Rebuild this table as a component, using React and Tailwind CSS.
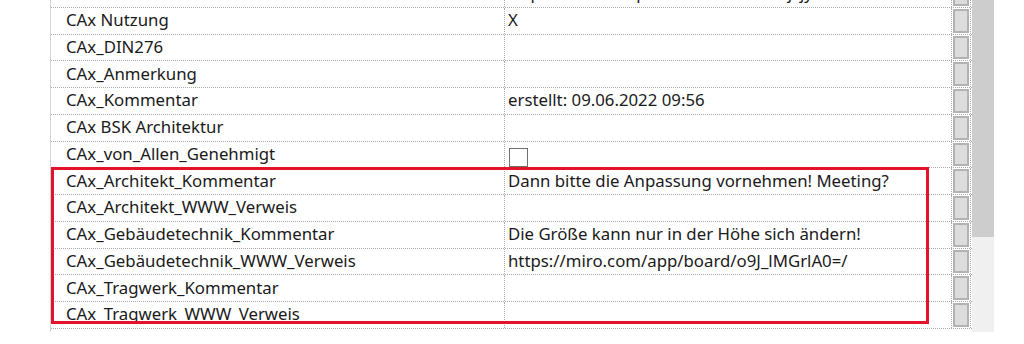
import React from 'react';

const rows = [
    { label: 'Formularinfo', value: 'https://www.dropbox.com/s/3c5uo-jzjyz9z/Formular' },
    { label: 'CAx Nutzung', value: 'X' },
    { label: 'CAx_DIN276', value: '' },
    { label: 'CAx_Anmerkung', value: '' },
    { label: 'CAx_Kommentar', value: 'erstellt: 09.06.2022 09:56' },
    { label: 'CAx BSK Architektur', value: '' },
    { label: 'CAx_von_Allen_Genehmigt', value: '', checkbox: true },
    { label: 'CAx_Architekt_Kommentar', value: 'Dann bitte die Anpassung vornehmen! Meeting?' },
    { label: 'CAx_Architekt_WWW_Verweis', value: '' },
    { label: 'CAx_Gebäudetechnik_Kommentar', value: 'Die Größe kann nur in der Höhe sich ändern!' },
    { label: 'CAx_Gebäudetechnik_WWW_Verweis', value: 'https://miro.com/app/board/o9J_lMGrlA0=/' },
    { label: 'CAx_Tragwerk_Kommentar', value: '' },
    { label: 'CAx_Tragwerk_WWW_Verweis', value: '' },
];

const Row = ({ row, first }) => (
    <div className={`flex h-[26.75px] border-b border-dotted border-[#a9a9a9] ${first ? '-mt-[19px]' : ''}`}>
        <div className='w-[453px] pl-[15px] flex items-center whitespace-nowrap overflow-hidden'>
            {row.label}
        </div>
        <div className='w-[447px] border-l border-dotted border-[#a9a9a9] pl-[3px] flex items-center whitespace-nowrap overflow-hidden'>
            {row.checkbox ? (
                <div className='w-[19px] h-[19px] border border-[#6e6e6e] bg-white mt-[7px] ml-[1px]'></div>
            ) : (
                row.value
            )}
        </div>
        <div className='w-[20px] border-l border-r border-dotted border-[#a9a9a9] bg-white px-[1px] py-[1px] flex'>
            <div className='flex-1 bg-[#dcdcdc] border-2 border-[#b2b2b2]'></div>
        </div>
    </div>
);

const App = () => {
    return (
        <div className='w-[1024px] h-[344px] bg-white overflow-hidden text-[16.8px] leading-none text-[#1a1a1a] font-["Noto_Sans",sans-serif]'>
            <div className='flex ml-[50px] h-[332px]'>
                <div className='relative w-[922px] border-l border-[#d4d4d4]'>
                    {rows.map((row, i) => (
                        <Row key={row.label} row={row} first={i === 0} />
                    ))}
                    {/* markierter Bereich */}
                    <div className='absolute left-0 top-[167px] w-[878px] h-[157px] border-[3px] border-[#e5122c] pointer-events-none'></div>
                </div>
                <div className='w-[22px] flex flex-col'>
                    <div className='h-[237px] bg-[#cdcdcd]'></div>
                    <div className='flex-1 bg-[#f0f0f0]'></div>
                </div>
            </div>
        </div>
    );
};

export default App;
